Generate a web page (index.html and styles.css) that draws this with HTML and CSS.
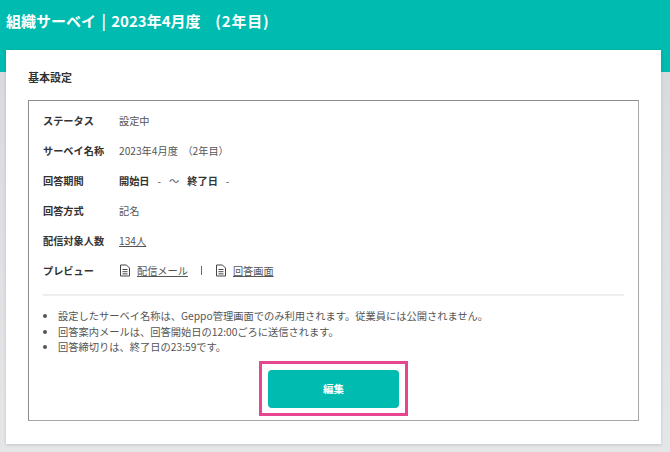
FILE: index.html
```html
<!DOCTYPE html>
<html lang="ja">
<head>
  <meta charset="UTF-8">
  <title>組織サーベイ</title>
  <link rel="stylesheet" href="styles.css">
</head>
<body>
  <header class="top-band">
    <h1 class="page-title">組織サーベイ | 2023年4月度&nbsp;&nbsp;<span class="year-note">(2年目)</span></h1>
  </header>

  <main class="card">
    <h2 class="card-title">基本設定</h2>

    <section class="settings">
      <dl class="rows">
        <div class="row">
          <dt>ステータス</dt>
          <dd>設定中</dd>
        </div>
        <div class="row">
          <dt>サーベイ名称</dt>
          <dd>2023年4月度&nbsp;&nbsp;（2年目）</dd>
        </div>
        <div class="row">
          <dt>回答期間</dt>
          <dd class="period"><b>開始日</b><span>-</span><span>～</span><b>終了日</b><span>-</span></dd>
        </div>
        <div class="row">
          <dt>回答方式</dt>
          <dd>記名</dd>
        </div>
        <div class="row">
          <dt>配信対象人数</dt>
          <dd><a href="#">134人</a></dd>
        </div>
        <div class="row">
          <dt>プレビュー</dt>
          <dd class="previews">
            <svg class="doc-icon" viewBox="0 0 12 13" aria-hidden="true"><path d="M1.5 1h6l3 3v8h-9zM3.5 5.5h5M3.5 7.7h5M3.5 9.9h5"/></svg>
            <a href="#">配信メール</a>
            <span class="sep"></span>
            <svg class="doc-icon" viewBox="0 0 12 13" aria-hidden="true"><path d="M1.5 1h6l3 3v8h-9zM3.5 5.5h5M3.5 7.7h5M3.5 9.9h5"/></svg>
            <a href="#">回答画面</a>
          </dd>
        </div>
      </dl>

      <ul class="notes">
        <li>設定したサーベイ名称は、Geppo管理画面でのみ利用されます。従業員には公開されません。</li>
        <li>回答案内メールは、回答開始日の12:00ごろに送信されます。</li>
        <li>回答締切りは、終了日の23:59です。</li>
      </ul>

      <div class="action">
        <div class="highlight">
          <button class="edit-btn" type="button">編集</button>
        </div>
      </div>
    </section>
  </main>
</body>
</html>
```

FILE: styles.css
```css
/* General Styling */
html, body {
  margin: 0;
  height: 452px;
  overflow: hidden;
}

body {
  background: linear-gradient(#d6d8db, #e4e6e8);
  font-family: "Noto Sans CJK JP", "Noto Sans", sans-serif;
  color: #444;
}

/* Header */
.top-band {
  height: 72px;
  background-color: #00bbaf;
}

.page-title {
  margin: 0;
  padding: 10px 0 0 6px;
  color: #fff;
  font-size: 15px;
  line-height: 22px;
  font-weight: 700;
  word-spacing: 2px;
}

.year-note {
  margin-left: 4px;
  letter-spacing: 0.8px;
}

/* Card */
.card {
  margin: -22px 9px 0 6px;
  height: 394px;
  padding: 20px 22px 0;
  box-sizing: border-box;
  background-color: #fff;
  box-shadow: 0 1px 3px rgba(0, 0, 0, 0.15);
}

.card-title {
  margin: 0 0 15px;
  font-size: 11px;
  line-height: 15px;
  font-weight: 700;
  color: #333;
}

.settings {
  height: 321px;
  padding: 4px 14px 0;
  box-sizing: border-box;
  border: 1px solid #8b8d92;
  border-right-color: #a5a7ab;
  border-bottom-color: #a5a7ab;
}

/* Rows */
.rows {
  margin: 0;
  padding-bottom: 9px;
  border-bottom: 2px solid #eeeeee;
}

.row {
  display: flex;
  align-items: center;
  height: 30px;
  font-size: 10.2px;
}

.row dt {
  width: 76px;
  font-weight: 700;
  color: #333;
}

.row dd {
  margin: 0;
  color: #555;
}

.row a {
  color: #555;
}

.period {
  display: flex;
  gap: 8px;
}

.period b {
  color: #333;
}

.previews {
  display: flex;
  align-items: center;
}

.doc-icon {
  width: 12px;
  height: 13px;
  margin-right: 6px;
  fill: none;
  stroke: #444;
  stroke-width: 1;
}

.sep {
  width: 1px;
  height: 9px;
  margin: 0 13px;
  background-color: #666;
}

/* Notes */
.notes {
  margin: 12px 0 0;
  padding: 0 0 0 15px;
  font-size: 10.25px;
  line-height: 15.5px;
  color: #555;
}

/* Button */
.action {
  display: flex;
  justify-content: center;
  margin-top: 6px;
}

.highlight {
  padding: 6px 6px 5px;
  border: 3px solid #e6468f;
}

.edit-btn {
  display: block;
  width: 131px;
  height: 38px;
  border: none;
  border-radius: 4px;
  background-color: #00bbaf;
  color: #fff;
  font-family: inherit;
  font-size: 10.5px;
  font-weight: 700;
}
```
